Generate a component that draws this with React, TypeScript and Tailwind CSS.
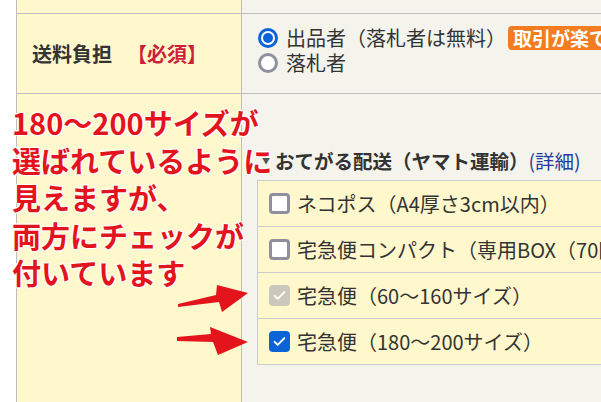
import React from "react";

const noteLines = [
    "180〜200サイズが",
    "選ばれているように",
    "見えますが、",
    "両方にチェックが",
    "付いています",
];

const options = [
    { label: "ネコポス（A4厚さ3cm以内）", state: "off" },
    { label: "宅急便コンパクト（専用BOX（70円）", state: "off" },
    { label: "宅急便（60〜160サイズ）", state: "disabled" },
    { label: "宅急便（180〜200サイズ）", state: "on" },
] as const;

const CheckMark = () => (
    <svg viewBox="0 0 20 20" className="w-[15px] h-[15px]">
        <path d="M3.5 10.5l4 4 9-9" fill="none" stroke="#fff" strokeWidth="2.6" strokeLinecap="round" strokeLinejoin="round" />
    </svg>
);

const Checkbox = ({ state }: { state: "off" | "on" | "disabled" }) => {
    if (state === "on") {
        return (
            <div className="w-[21px] h-[21px] rounded-[4px] bg-[#0b63d8] flex items-center justify-center shrink-0">
                <CheckMark />
            </div>
        );
    }
    if (state === "disabled") {
        return (
            <div className="w-[21px] h-[21px] rounded-[4px] bg-[#cbc8bb] flex items-center justify-center shrink-0">
                <CheckMark />
            </div>
        );
    }
    return <div className="w-[21px] h-[21px] rounded-[4px] border-[3px] border-[#8f8f9d] bg-white shrink-0" />;
};

const Radio = ({ checked }: { checked: boolean }) =>
    checked ? (
        <div className="w-[20px] h-[20px] rounded-full border-[3px] border-[#0b63d8] bg-white flex items-center justify-center shrink-0">
            <div className="w-[10px] h-[10px] rounded-full bg-[#0b63d8]" />
        </div>
    ) : (
        <div className="w-[20px] h-[20px] rounded-full border-[3px] border-[#8f8f9d] bg-white shrink-0" />
    );

export default function App() {
    return (
        <div className="relative w-[601px] h-[402px] overflow-hidden bg-white text-[#333] font-[family-name:'Noto_Sans_CJK_JP',sans-serif]">
            <div className="ml-[16px] h-full border-l border-[#bdbdbd] flex flex-col">
                {/* previous row, cut off */}
                <div className="flex h-[14px] border-b border-[#bdbdbd] shrink-0">
                    <div className="w-[225px] shrink-0 bg-[#fff8cc] border-r border-[#bdbdbd]" />
                    <div className="flex-1 bg-[#f4f4ec]" />
                </div>

                <div className="flex h-[80px] border-b border-[#bdbdbd] shrink-0">
                    <div className="w-[225px] shrink-0 bg-[#fff8cc] border-r border-[#bdbdbd] flex items-center pl-[15px] text-[20px] font-bold whitespace-nowrap">
                        送料負担
                        <span className="ml-[15px] text-[#cc1f3a]">【必須】</span>
                    </div>
                    <div className="flex-1 min-w-0 overflow-hidden bg-[#f4f4ec] pl-[16px] pt-[12px] text-[20px] leading-[24px] whitespace-nowrap">
                        <div className="flex items-center gap-[8px]">
                            <Radio checked />
                            <span>出品者（落札者は無料）</span>
                            <span className="-ml-[6px] shrink-0 rounded-[4px] bg-[#f47c20] px-[5px] text-[19px] leading-[24px] font-bold text-white">
                                取引が楽です！
                            </span>
                        </div>
                        <div className="flex items-center gap-[8px] mt-[1px]">
                            <Radio checked={false} />
                            <span>落札者</span>
                        </div>
                    </div>
                </div>

                <div className="flex flex-1">
                    <div className="w-[225px] shrink-0 bg-[#fff8cc] border-r border-[#bdbdbd]" />
                    <div className="flex-1 min-w-0 bg-[#f4f4ec] pl-[15px] pt-[54px] overflow-hidden">
                        <div className="flex items-center h-[26px] whitespace-nowrap text-[19.5px]">
                            <span className="w-[18px] shrink-0 text-[8px] text-[#555] pl-[5px]">▼</span>
                            <span className="font-bold">おてがる配送（ヤマト運輸）</span>
                            <span className="text-[#1f3f9a]">(詳細)</span>
                        </div>
                        <div className="mt-[6px] w-[420px] border border-[#cccccc] bg-[#fff8cc]">
                            {options.map((opt, i) => (
                                <div
                                    key={opt.label}
                                    className={`flex items-center gap-[7px] pl-[11px] whitespace-nowrap text-[20px] ${
                                        i === 0 ? "h-[45px]" : "h-[46px] border-t border-[#cccccc]"
                                    }`}
                                >
                                    <Checkbox state={opt.state} />
                                    <span>{opt.label}</span>
                                </div>
                            ))}
                        </div>
                    </div>
                </div>
            </div>

            {/* annotation */}
            <div className="absolute left-[12px] top-[104px] text-[29px] leading-[37.5px] font-bold text-[#e3141b] [text-shadow:1px_1px_0_#fff,-1px_-1px_0_#fff,1px_-1px_0_#fff,-1px_1px_0_#fff,0_0_2px_#fff]">
                {noteLines.map((line) => (
                    <div key={line} className="whitespace-nowrap">
                        {line}
                    </div>
                ))}
            </div>

            <svg className="absolute inset-0 pointer-events-none" width="601" height="402" viewBox="0 0 601 402">
                <polygon points="178,304 216,295 217,285 248,293 222,312 219,302 178,307" fill="#e3141b" />
                <polygon points="177,337 211,334 210,327 248,342 218,355 213,342 177,341" fill="#e3141b" />
            </svg>
        </div>
    );
}
